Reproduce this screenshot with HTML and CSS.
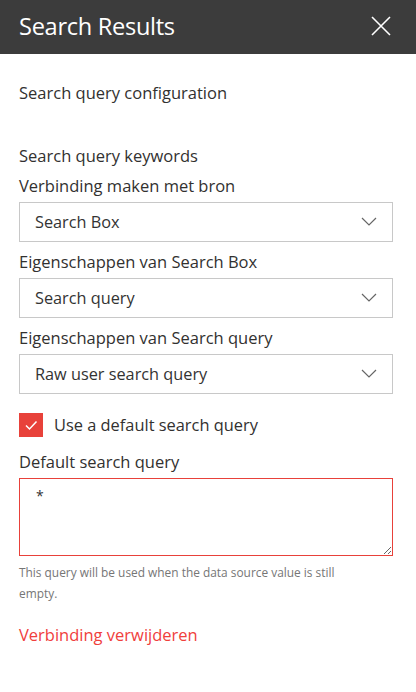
FILE: index.html
```html
<!DOCTYPE html>
<html lang="en">
<head>
<meta charset="utf-8">
<title>Search Results</title>
<link rel="stylesheet" href="styles.css">
</head>
<body>
<div class="panel">
  <header class="panel-header">
    <h1 class="panel-title">Search Results</h1>
    <button class="close-btn" aria-label="Close">
      <svg width="20" height="20" viewBox="0 0 20 20"><path d="M1 1 L19 19 M19 1 L1 19" stroke="#fff" stroke-width="1.6" fill="none"/></svg>
    </button>
  </header>
  <main class="panel-body">
    <div class="section-title">Search query configuration</div>
    <div class="group-title">Search query keywords</div>
    <div class="field-label first">Verbinding maken met bron</div>
    <div class="dropdown">
      <span class="dropdown-text">Search Box</span>
      <svg class="chevron" width="16" height="9" viewBox="0 0 16 9"><path d="M1 1 L8 8 L15 1" stroke="#666" stroke-width="1.2" fill="none"/></svg>
    </div>
    <div class="field-label">Eigenschappen van Search Box</div>
    <div class="dropdown">
      <span class="dropdown-text">Search query</span>
      <svg class="chevron" width="16" height="9" viewBox="0 0 16 9"><path d="M1 1 L8 8 L15 1" stroke="#666" stroke-width="1.2" fill="none"/></svg>
    </div>
    <div class="field-label">Eigenschappen van Search query</div>
    <div class="dropdown">
      <span class="dropdown-text">Raw user search query</span>
      <svg class="chevron" width="16" height="9" viewBox="0 0 16 9"><path d="M1 1 L8 8 L15 1" stroke="#666" stroke-width="1.2" fill="none"/></svg>
    </div>
    <div class="checkbox-row">
      <span class="checkbox">
        <svg width="16" height="16" viewBox="0 0 16 16"><path d="M3 8.5 L6.5 12 L13.5 4.5" stroke="#fff" stroke-width="1.5" fill="none"/></svg>
      </span>
      <span class="checkbox-label">Use a default search query</span>
    </div>
    <div class="field-label textarea-label">Default search query</div>
    <textarea class="query-input">*</textarea>
    <div class="help-text">This query will be used when the data source value is still empty.</div>
    <a class="remove-link" href="#">Verbinding verwijderen</a>
  </main>
</div>
</body>
</html>
```
FILE: styles.css
```css
* { box-sizing: border-box; }
html, body {
  margin: 0;
  padding: 0;
  background: #fff;
  font-family: "Open Sans", "Noto Sans", sans-serif;
  color: #323130;
}
.panel { width: 416px; }
.panel-header {
  height: 54px;
  background: #3c3c3c;
  display: flex;
  align-items: center;
  justify-content: space-between;
  padding: 0 25px 0 19px;
}
.panel-title {
  margin: 0;
  font-size: 23.6px;
  font-weight: 400;
  color: #fff;
  letter-spacing: -0.3px;
  line-height: 30px;
  padding-bottom: 2px;
}
.close-btn {
  background: none;
  border: 0;
  padding: 0;
  width: 20px;
  height: 20px;
  display: flex;
  margin-top: -2px;
}
.panel-body {
  padding: 0 23px 0 19px;
  display: flex;
  flex-direction: column;
  font-size: 16.5px;
}
.section-title {
  margin-top: 27px;
  line-height: 24px;
}
.group-title {
  margin-top: 39px;
  line-height: 24px;
}
.field-label {
  margin-top: 8px;
  margin-bottom: 4px;
  line-height: 24px;
}
.field-label.first { margin-top: 6px; }
.dropdown {
  height: 40px;
  border: 1px solid #c8c8c8;
  display: flex;
  align-items: center;
  justify-content: space-between;
  padding: 0 15px 0 15px;
}
.dropdown-text {
  font-size: 16.3px;
  color: #333;
}
.chevron { margin-top: -1px; }
.checkbox-row {
  margin-top: 19px;
  display: flex;
  align-items: center;
  gap: 11px;
}
.checkbox {
  width: 24px;
  height: 24px;
  background: #e8413a;
  display: flex;
  align-items: center;
  justify-content: center;
}
.checkbox-label {
  font-size: 16.4px;
  line-height: 24px;
}
.field-label.textarea-label { margin-top: 13px; }
.query-input {
  display: block;
  width: 100%;
  height: 78px;
  border: 1px solid #e8413a;
  border-radius: 0;
  padding: 7px 16px;
  font-family: "Open Sans", "Noto Sans", sans-serif;
  font-size: 14px;
  color: #333;
  resize: vertical;
  outline: none;
  margin: 0;
}
.help-text {
  margin-top: 6px;
  font-size: 11.9px;
  line-height: 21px;
  color: #767676;
  padding-right: 20px;
}
.remove-link {
  margin-top: 19px;
  font-size: 16.5px;
  line-height: 24px;
  color: #f0403c;
  text-decoration: none;
  align-self: flex-start;
}
```
